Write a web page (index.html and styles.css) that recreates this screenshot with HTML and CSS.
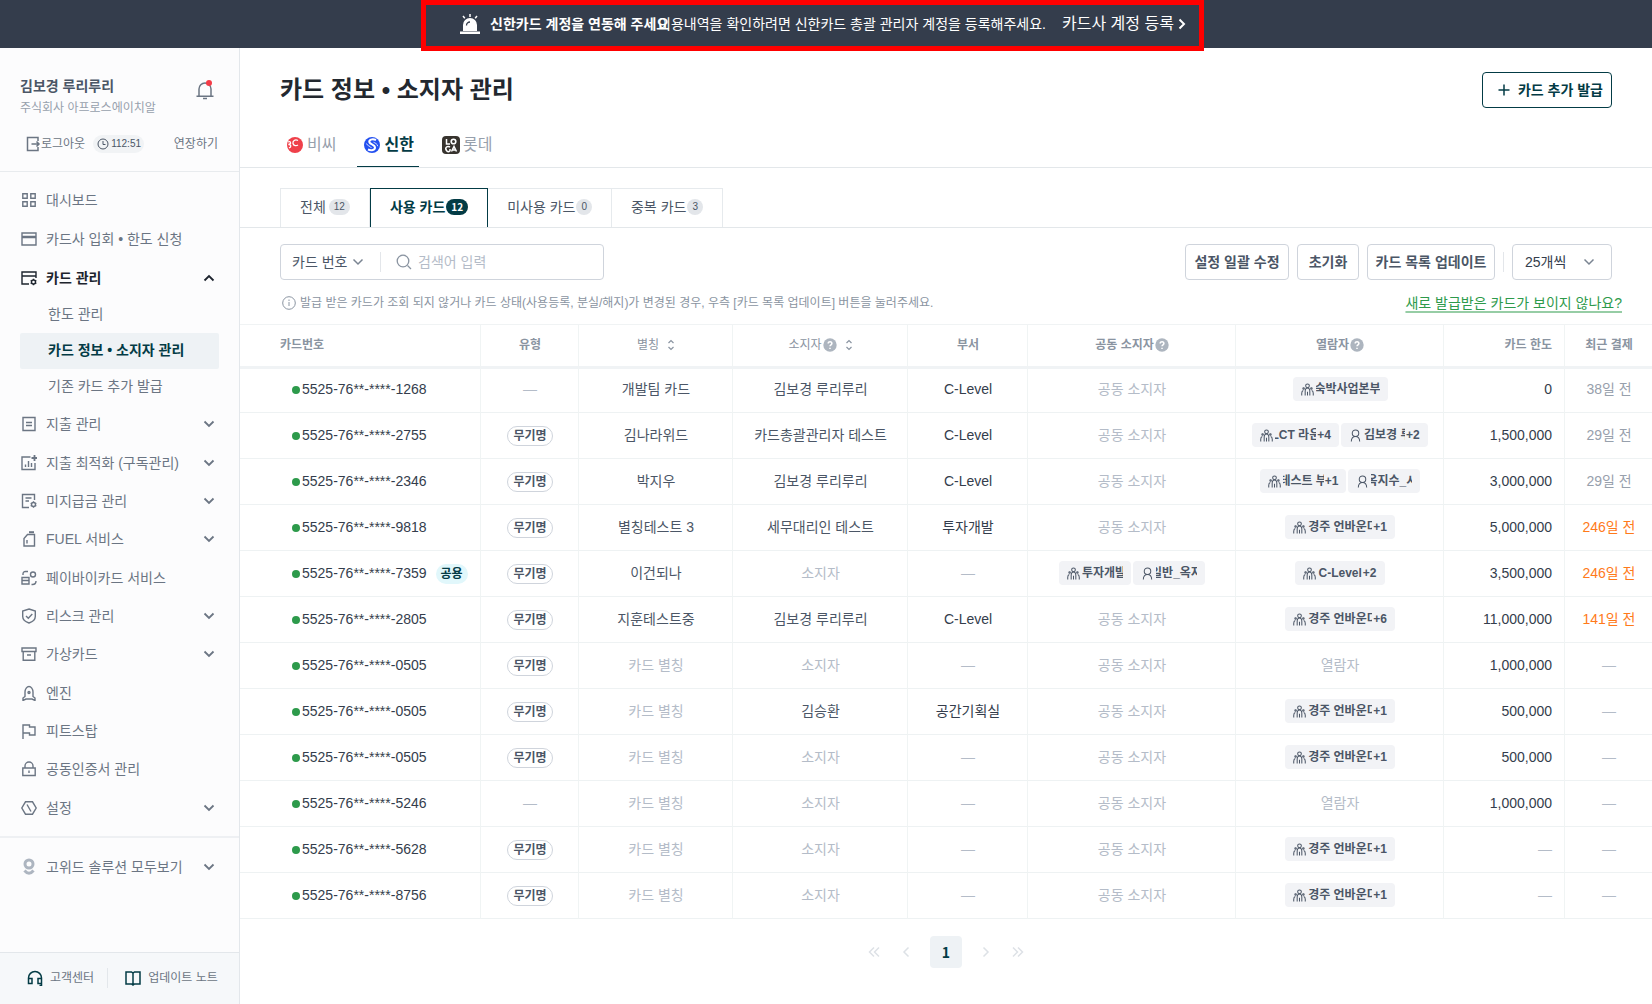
FILE: index.html
```html
<!DOCTYPE html>
<html lang="ko">
<head>
    <meta charset="UTF-8">
    <meta name="viewport" content="width=device-width, initial-scale=1.0">
    <title>카드 정보 • 소지자 관리</title>
    <link rel="stylesheet" href="styles.css">
</head>
<body>
    <svg class="sprite" aria-hidden="true">
        <symbol id="down" viewBox="0 0 12 12"><path d="M1.5 3.5 6 8l4.5-4.5"/></symbol>
        <symbol id="up" viewBox="0 0 12 12"><path d="M1.5 8.5 6 4l4.5 4.5"/></symbol>
        <symbol id="sort" viewBox="0 0 8 12"><path d="M1.5 4 4 1.5 6.5 4M1.5 8 4 10.5 6.5 8"/></symbol>
        <symbol id="help" viewBox="0 0 14 14"><circle cx="7" cy="7" r="6.7" fill="#adb5bf" stroke="none"/><path d="M5.2 5.5c0-2.4 3.7-2.3 3.7 0C8.9 6.8 7 6.9 7 8.300M7 9.700v1.200" stroke="#fff" stroke-width="1.500"/></symbol>
        <symbol id="group" viewBox="0 0 14 14"><circle cx="7" cy="3" r="2"/><circle cx="2.800" cy="6" r=".8"/><circle cx="11.200" cy="6" r=".8"/><path d="M4.500 13.500V9C4.500 6.500 5.500 5.300 7 5.300S9.500 6.500 9.500 9v4.500M7 9.500v4M.8 13.500V11c0-1.700.6-2.800 1.700-3M13.200 13.500V11c0-1.700-.6-2.800-1.700-3"/></symbol>
        <symbol id="person" viewBox="0 0 14 14"><circle cx="7" cy="4.500" r="3.500"/><path d="M2.500 13.500C2.500 10 4.300 8 7 8s4.500 2 4.500 5.500"/></symbol>
    </svg>

    <div class="banner">
        <svg class="siren" viewBox="0 0 20 20"><path d="M0 17.500h20V20H0zM3 17v-6a7 7 0 0 1 14 0v6z" fill="#fff"/><path d="M6.500 11.500A3.500 3.500 0 0 1 10 8" fill="none" stroke="#343d4c" stroke-width="1.300"/><path d="M10 0v3M3 2l1.800 2.200M17 2l-1.800 2.200" stroke="#fff" stroke-width="1.500"/></svg>
        <strong class="banner-title">신한카드 계정을 연동해 주세요</strong>
        <span class="banner-text">이용내역을 확인하려면 신한카드 총괄 관리자 계정을 등록해주세요.</span>
        <a href="#" class="banner-link">카드사 계정 등록<svg viewBox="0 0 8 12"><path d="M1.500 1.500 6 6l-4.500 4.500"/></svg></a>
        <div class="highlight"></div>
    </div>

    <div class="layout">
        <aside class="sidebar">
            <div class="profile">
                <div class="profile-top">
                    <div>
                        <div class="user">김보경 루리루리</div>
                        <div class="company">주식회사 아프로스에이치알</div>
                    </div>
                    <button class="bell" aria-label="알림"><svg viewBox="0 0 20 20"><path d="M4 16V9a6 6 0 0 1 12 0v7M1.500 16.300h17M8 18.500h4"/><circle cx="14" cy="3" r="3" fill="#f43b47" stroke="none"/></svg></button>
                </div>
                <div class="session">
                    <button class="logout"><svg viewBox="0 0 16 16"><path d="M13 5V1.500H2.500v13H13V11M6.500 8H14M11.500 5.500 14 8l-2.500 2.500"/></svg>로그아웃</button>
                    <span class="clock"><svg viewBox="0 0 12 12"><circle cx="6" cy="6" r="5"/><path d="M6 3v3.500h2.500"/></svg>112:51</span>
                    <button class="extend">연장하기</button>
                </div>
            </div>

            <nav class="nav">
                <div class="nav-top">
                    <a href="#" class="nav-item"><svg viewBox="0 0 16 16"><path d="M1.800 1.800h4.400v4.400H1.800zM9.800 1.800h4.400v4.400H9.800zM1.800 9.800h4.400v4.400H1.800zM9.800 9.800h4.400v4.400H9.800z"/></svg>대시보드</a>
                    <a href="#" class="nav-item"><svg viewBox="0 0 16 16"><path d="M1 2h14v12H1z"/><path d="M1 6h14" stroke-width="2.500"/></svg>카드사 입회 • 한도 신청</a>
                    <a href="#" class="nav-item open"><svg viewBox="0 0 16 16"><path d="M8 14H1V2h14v6M1 6h14"/><circle cx="12.500" cy="12" r="2"/><path d="M12.500 8.800V10M12.500 14v1.300M9.700 10.400l1 .6M14.300 13l1 .6M15.300 10.400l-1 .6M10.700 13l-1 .6"/></svg>카드 관리<svg class="arrow"><use href="#up"/></svg></a>
                </div>
                <div class="nav-sub">
                    <a href="#">한도 관리</a>
                    <a href="#" class="current">카드 정보 • 소지자 관리</a>
                    <a href="#">기존 카드 추가 발급</a>
                </div>
                <div class="nav-rest">
                    <a href="#" class="nav-item"><svg viewBox="0 0 16 16"><path d="M2 1.500h12v13H2zM5 6.500h6M5 9.500h6"/></svg>지출 관리<svg class="arrow"><use href="#down"/></svg></a>
                    <a href="#" class="nav-item"><svg viewBox="0 0 16 16"><path d="M9.500 2H1v12.500h13V8M4.500 12V9.500M7.500 12V6M10.500 12V8"/><path d="M13.500 0v6M10.500 3h6" stroke-width="1.800"/></svg>지출 최적화 (구독관리)<svg class="arrow"><use href="#down"/></svg></a>
                    <a href="#" class="nav-item"><svg viewBox="0 0 16 16"><path d="M8 14.500H1.500v-13h12V7M4.500 5h6M4.500 8h3.500"/><circle cx="12.500" cy="11.500" r="2"/><path d="M12.500 8.300v1.200M12.500 13.500v1.300M9.700 10l1 .6M14.300 12.500l1 .6M15.300 10l-1 .6M10.700 12.500l-1 .6"/></svg>미지급금 관리<svg class="arrow"><use href="#down"/></svg></a>
                    <a href="#" class="nav-item"><svg viewBox="0 0 16 16"><path d="M3 15V7.500l3.500-4H13.500V15zM6 9v3.500"/><path d="M8 1.200h5" stroke-width="2"/></svg>FUEL 서비스<svg class="arrow"><use href="#down"/></svg></a>
                    <a href="#" class="nav-item"><svg viewBox="0 0 16 16"><path d="M1 7.500h7v6.500H1zM1 10.500h7M2 5V4q0-2.500 2.500-2.500H7M15 11q0 3.500-3.500 3.500h-1"/><circle cx="12" cy="4.500" r="2.500"/></svg>페이바이카드 서비스</a>
                    <a href="#" class="nav-item"><svg viewBox="0 0 16 16"><path d="M8 1 14.300 3v5.500c0 3-2.800 5.300-6.300 6.500-3.500-1.200-6.300-3.500-6.300-6.500V3zM5 8l2.300 2.200L11.300 6"/></svg>리스크 관리<svg class="arrow"><use href="#down"/></svg></a>
                    <a href="#" class="nav-item"><svg viewBox="0 0 16 16"><path d="M1 2h14v3.500H1zM2.200 5.500v8.800h11.600V5.500M6 9h4"/></svg>가상카드<svg class="arrow"><use href="#down"/></svg></a>
                    <a href="#" class="nav-item"><svg viewBox="0 0 16 16"><path d="M4 11.500V7c0-3 2-5.500 4-5.500S12 4 12 7v4.500l2 1.500v2.500L11 14H5l-3 1.500V13z"/><circle cx="8" cy="7.500" r="1"/></svg>엔진</a>
                    <a href="#" class="nav-item"><svg viewBox="0 0 16 16"><path d="M2 16V2h6.500v2h5.500v8H8.500v-2H2"/></svg>피트스탑</a>
                    <a href="#" class="nav-item"><svg viewBox="0 0 16 16"><path d="M1.800 7h12.400v7.500H1.800zM4 7V5a4 4 0 0 1 8 0v2M8 9.500V12"/></svg>공동인증서 관리</a>
                    <a href="#" class="nav-item"><svg viewBox="0 0 16 16"><path d="M4.500 1.800h7L15.200 8l-3.700 6.200h-7L.8 8zM6 4.500l4 7"/></svg>설정<svg class="arrow"><use href="#down"/></svg></a>
                </div>
            </nav>

            <a href="#" class="nav-item solutions"><svg class="gowid" viewBox="0 0 16 18"><circle cx="8" cy="6" r="4"/><path d="M3.500 12.500q4.500 5.500 9 0"/></svg>고위드 솔루션 모두보기<svg class="arrow"><use href="#down"/></svg></a>

            <div class="side-foot">
                <a href="#"><svg viewBox="0 0 16 16"><path d="M1.500 12V8a6.500 6.500 0 0 1 13 0v4M1.500 8.500H5v5H1.500zM11 8.500h3.500v5H11zM14.500 13.500v2h-2"/></svg>고객센터</a>
                <a href="#" class="notes"><svg viewBox="0 0 16 16"><path d="M1 2h5.500L8 3l1.500-1H15v12H9.500L8 15l-1.500-1H1zM8 3v12"/></svg>업데이트 노트</a>
            </div>
        </aside>

        <main class="main">
            <header class="head">
                <h1>카드 정보 • 소지자 관리</h1>
                <button class="btn add"><svg viewBox="0 0 12 12"><path d="M6 .5v11M.5 6h11"/></svg>카드 추가 발급</button>
            </header>

            <div class="companies">
                <button><svg class="logo" viewBox="0 0 16 16"><circle cx="8" cy="8" r="8" fill="#ef404a"/><path d="M1 5q3-1 2.500 1.500L1.500 7.500q3 0 2 2.500l-1.500 1M11 3.500C8 2 5.500 4 6 6.500s3.500 2.500 5 1.500" fill="none" stroke="#fff" stroke-width="1.300"/></svg>비씨</button>
                <button class="active"><svg class="logo" viewBox="0 0 16 16"><circle cx="8" cy="8" r="8" fill="#2350f0"/><path d="M12 3C8 1 4.500 3 5.500 5.500c1 2 5.500 2 5.500 5 0 2.500-3.500 3.500-7 2" fill="none" stroke="#fff" stroke-width="2"/><path d="M2.500 6.500c.5 2.500 4 2.500 5 4.500M9.500 5.200c1.500.8 4 1.500 4.200 4" fill="none" stroke="#fff" stroke-width=".8"/></svg>신한</button>
                <button class="lotte"><svg class="logo" viewBox="0 0 18 18"><rect width="18" height="18" rx="4" fill="#37332e"/><path d="M4.500 3v5h3.500M8 11q-2-1.200-3.500 0t0 3.500 3.500.2V13M9.500 15.500l2.500-5 2.500 5M10.500 14h3" fill="none" stroke="#fff" stroke-width="1.500"/><circle cx="11.500" cy="5.500" r="2.300" fill="none" stroke="#fff" stroke-width="1.600"/></svg>롯데</button>
            </div>

            <div class="filters">
                <button>전체<span class="count">12</span></button>
                <button class="active">사용 카드<span class="count">12</span></button>
                <button>미사용 카드<span class="count">0</span></button>
                <button>중복 카드<span class="count">3</span></button>
            </div>

            <div class="toolbar">
                <div class="search">
                    <select class="search-type" aria-label="검색 조건"><option>카드 번호</option></select>
                    <svg class="chev"><use href="#down"/></svg>
                    <span class="bar"></span>
                    <svg class="glass" viewBox="0 0 16 16"><circle cx="7" cy="7" r="5.800"/><path d="m11.500 11.500 3.500 3.500"/></svg>
                    <input type="text" placeholder="검색어 입력" aria-label="검색어">
                </div>
                <div class="actions">
                    <button class="btn w-bulk">설정 일괄 수정</button>
                    <button class="btn w-reset">초기화</button>
                    <button class="btn w-update">카드 목록 업데이트</button>
                    <span class="bar"></span>
                    <div class="page-size">
                        <select aria-label="페이지당 개수"><option>25개씩</option></select>
                        <svg class="chev"><use href="#down"/></svg>
                    </div>
                </div>
            </div>

            <div class="notice">
                <p><svg viewBox="0 0 14 14"><circle cx="7" cy="7" r="6.300"/><path d="M7 6v4M7 3.500V5"/></svg>발급 받은 카드가 조회 되지 않거나 카드 상태(사용등록, 분실/해지)가 변경된 경우, 우측 [카드 목록 업데이트] 버튼을 눌러주세요.</p>
                <a href="#">새로 발급받은 카드가 보이지 않나요?</a>
            </div>

            <table class="cards">
                <colgroup>
                    <col class="c-number"><col class="c-type"><col class="c-alias"><col class="c-owner"><col class="c-dept"><col class="c-shared"><col class="c-viewer"><col class="c-limit"><col>
                </colgroup>
                <thead>
                    <tr>
                        <th class="number-head">카드번호</th>
                        <th>유형</th>
                        <th><button class="sort">별칭<svg><use href="#sort"/></svg></button></th>
                        <th><button class="sort">소지자<svg class="help"><use href="#help"/></svg><svg><use href="#sort"/></svg></button></th>
                        <th>부서</th>
                        <th><span class="th-help">공동 소지자<svg class="help"><use href="#help"/></svg></span></th>
                        <th><span class="th-help">열람자<svg class="help"><use href="#help"/></svg></span></th>
                        <th class="limit">카드 한도</th>
                        <th>최근 결제</th>
                    </tr>
                </thead>
                <tbody>
                    <tr>
                        <td class="number">5525-76**-****-1268</td>
                        <td class="none">—</td>
                        <td>개발팀 카드</td>
                        <td>김보경 루리루리</td>
                        <td class="dept">C-Level</td>
                        <td class="none">공동 소지자</td>
                        <td><span class="chip wide"><svg><use href="#group"/></svg><span class="clip">숙박사업본부</span></span></td>
                        <td class="limit">0</td>
                        <td class="recent">38일 전</td>
                    </tr>
                    <tr>
                        <td class="number">5525-76**-****-2755</td>
                        <td><span class="pill">무기명</span></td>
                        <td>김나라위드</td>
                        <td>카드총괄관리자 테스트</td>
                        <td class="dept">C-Level</td>
                        <td class="none">공동 소지자</td>
                        <td><span class="chip"><svg><use href="#group"/></svg><span class="clip">LCT 라운</span><span class="more">+4</span></span><span class="chip"><svg><use href="#person"/></svg><span class="clip start">김보경 루</span><span class="more">+2</span></span></td>
                        <td class="limit">1,500,000</td>
                        <td class="recent">29일 전</td>
                    </tr>
                    <tr>
                        <td class="number">5525-76**-****-2346</td>
                        <td><span class="pill">무기명</span></td>
                        <td>박지우</td>
                        <td>김보경 루리루리</td>
                        <td class="dept">C-Level</td>
                        <td class="none">공동 소지자</td>
                        <td><span class="chip"><svg><use href="#group"/></svg><span class="clip">테스트 부</span><span class="more">+1</span></span><span class="chip"><svg><use href="#person"/></svg><span class="clip">옥지수_시</span></span></td>
                        <td class="limit">3,000,000</td>
                        <td class="recent">29일 전</td>
                    </tr>
                    <tr>
                        <td class="number">5525-76**-****-9818</td>
                        <td><span class="pill">무기명</span></td>
                        <td>별칭테스트 3</td>
                        <td>세무대리인 테스트</td>
                        <td class="dept">투자개발</td>
                        <td class="none">공동 소지자</td>
                        <td><span class="chip wide"><svg><use href="#group"/></svg><span class="clip start">경주 언바운더</span><span class="more">+1</span></span></td>
                        <td class="limit">5,000,000</td>
                        <td class="recent late">246일 전</td>
                    </tr>
                    <tr>
                        <td class="number">5525-76**-****-7359<span class="shared">공용</span></td>
                        <td><span class="pill">무기명</span></td>
                        <td>이건되나</td>
                        <td class="none">소지자</td>
                        <td class="none">—</td>
                        <td><span class="chip"><svg><use href="#group"/></svg><span class="clip start">투자개발</span></span><span class="chip"><svg><use href="#person"/></svg><span class="clip">일반_옥지</span></span></td>
                        <td><span class="chip"><svg><use href="#group"/></svg><span>C-Level</span><span class="more">+2</span></span></td>
                        <td class="limit">3,500,000</td>
                        <td class="recent late">246일 전</td>
                    </tr>
                    <tr>
                        <td class="number">5525-76**-****-2805</td>
                        <td><span class="pill">무기명</span></td>
                        <td>지훈테스트중</td>
                        <td>김보경 루리루리</td>
                        <td class="dept">C-Level</td>
                        <td class="none">공동 소지자</td>
                        <td><span class="chip wide"><svg><use href="#group"/></svg><span class="clip start">경주 언바운더</span><span class="more">+6</span></span></td>
                        <td class="limit">11,000,000</td>
                        <td class="recent late">141일 전</td>
                    </tr>
                    <tr>
                        <td class="number">5525-76**-****-0505</td>
                        <td><span class="pill">무기명</span></td>
                        <td class="none">카드 별칭</td>
                        <td class="none">소지자</td>
                        <td class="none">—</td>
                        <td class="none">공동 소지자</td>
                        <td class="none">열람자</td>
                        <td class="limit">1,000,000</td>
                        <td class="none">—</td>
                    </tr>
                    <tr>
                        <td class="number">5525-76**-****-0505</td>
                        <td><span class="pill">무기명</span></td>
                        <td class="none">카드 별칭</td>
                        <td>김승환</td>
                        <td class="dept">공간기획실</td>
                        <td class="none">공동 소지자</td>
                        <td><span class="chip wide"><svg><use href="#group"/></svg><span class="clip start">경주 언바운더</span><span class="more">+1</span></span></td>
                        <td class="limit">500,000</td>
                        <td class="none">—</td>
                    </tr>
                    <tr>
                        <td class="number">5525-76**-****-0505</td>
                        <td><span class="pill">무기명</span></td>
                        <td class="none">카드 별칭</td>
                        <td class="none">소지자</td>
                        <td class="none">—</td>
                        <td class="none">공동 소지자</td>
                        <td><span class="chip wide"><svg><use href="#group"/></svg><span class="clip start">경주 언바운더</span><span class="more">+1</span></span></td>
                        <td class="limit">500,000</td>
                        <td class="none">—</td>
                    </tr>
                    <tr>
                        <td class="number">5525-76**-****-5246</td>
                        <td class="none">—</td>
                        <td class="none">카드 별칭</td>
                        <td class="none">소지자</td>
                        <td class="none">—</td>
                        <td class="none">공동 소지자</td>
                        <td class="none">열람자</td>
                        <td class="limit">1,000,000</td>
                        <td class="none">—</td>
                    </tr>
                    <tr>
                        <td class="number">5525-76**-****-5628</td>
                        <td><span class="pill">무기명</span></td>
                        <td class="none">카드 별칭</td>
                        <td class="none">소지자</td>
                        <td class="none">—</td>
                        <td class="none">공동 소지자</td>
                        <td><span class="chip wide"><svg><use href="#group"/></svg><span class="clip start">경주 언바운더</span><span class="more">+1</span></span></td>
                        <td class="limit none">—</td>
                        <td class="none">—</td>
                    </tr>
                    <tr>
                        <td class="number">5525-76**-****-8756</td>
                        <td><span class="pill">무기명</span></td>
                        <td class="none">카드 별칭</td>
                        <td class="none">소지자</td>
                        <td class="none">—</td>
                        <td class="none">공동 소지자</td>
                        <td><span class="chip wide"><svg><use href="#group"/></svg><span class="clip start">경주 언바운더</span><span class="more">+1</span></span></td>
                        <td class="limit none">—</td>
                        <td class="none">—</td>
                    </tr>
                </tbody>
            </table>

            <div class="pagination">
                <button aria-label="처음"><svg viewBox="0 0 12 12"><path d="M6 1.500 1.500 6 6 10.500M11 1.500 6.500 6l4.500 4.500"/></svg></button>
                <button aria-label="이전"><svg viewBox="0 0 12 12"><path d="M8.500 1.500 4 6l4.500 4.500"/></svg></button>
                <button class="page">1</button>
                <button aria-label="다음"><svg viewBox="0 0 12 12"><path d="M3.500 1.500 8 6l-4.500 4.500"/></svg></button>
                <button aria-label="마지막"><svg viewBox="0 0 12 12"><path d="M1 1.500 5.500 6 1 10.500M6 1.500 10.500 6 6 10.500"/></svg></button>
            </div>
        </main>
    </div>
</body>
</html>
```

FILE: styles.css
```css
* {
    box-sizing: border-box;
}

body {
    margin: 0;
    min-height: 100vh;
    display: flex;
    flex-direction: column;
    font-family: "Liberation Sans", "Noto Sans CJK KR", sans-serif;
    font-size: 14px;
    line-height: 20px;
    color: #4b5666;
    background: #fff;
}

a {
    color: inherit;
    text-decoration: none;
}

button, input, select {
    font: inherit;
    color: inherit;
    margin: 0;
    padding: 0;
    border: none;
    background: none;
    outline: none;
    white-space: nowrap;
}

select {
    appearance: none;
}

svg {
    flex: none;
    fill: none;
    stroke: currentColor;
    stroke-width: 1.5;
}

.sprite {
    display: none;
}

/* top banner */
.banner {
    position: relative;
    display: flex;
    align-items: center;
    justify-content: center;
    height: 48px;
    padding-right: 6px;
    background: #343d4c;
    color: #fff;
    white-space: nowrap;
}

.siren {
    width: 20px;
    height: 20px;
    margin-right: 10px;
    stroke: none;
}

.banner-title {
    width: 168px;
}

.banner-link {
    display: flex;
    align-items: center;
    gap: 4px;
    margin-left: 16px;
    font-size: 16px;
}

.banner-link svg {
    width: 8px;
    height: 12px;
    stroke-width: 2;
}

.highlight {
    position: absolute;
    top: 0;
    left: 50%;
    width: 783px;
    height: 51px;
    margin-left: -405px;
    border: 5px solid #f00;
}

.layout {
    flex: 1;
    display: flex;
}

/* sidebar */
.sidebar {
    flex: none;
    width: 240px;
    display: flex;
    flex-direction: column;
    background: #fcfcfd;
    border-right: 1px solid #e3e7eb;
    color: #6b7583;
}

.profile {
    height: 124px;
    padding: 28px 21px 0 20px;
    border-bottom: 1px solid #e8ebee;
}

.profile-top {
    display: flex;
    align-items: flex-start;
    justify-content: space-between;
}

.user {
    font-weight: bold;
    color: #4b5666;
}

.company {
    padding-top: 2px;
    font-size: 12px;
    color: #97a0ac;
}

.bell {
    padding: 4px 3px 0 0;
}

.bell svg {
    display: block;
    width: 20px;
    height: 20px;
}

.session {
    display: flex;
    align-items: center;
    margin-top: 16px;
    padding-left: 5px;
    font-size: 12px;
}

.logout {
    display: flex;
    align-items: center;
}

.logout svg {
    width: 16px;
    height: 16px;
}

.clock {
    display: flex;
    align-items: center;
    gap: 2px;
    height: 18px;
    margin-left: 8px;
    padding: 0 3px 0 4px;
    border-radius: 9px;
    background: #f1f3f5;
    color: #4b5666;
    font-size: 10px;
}

.clock svg {
    width: 12px;
    height: 12px;
    stroke-width: 1;
}

.extend {
    margin-left: auto;
}

.nav {
    padding: 9px 0;
    border-bottom: 2px solid #eef0f3;
}

.nav-top, .nav-rest {
    display: grid;
    grid-auto-rows: 1fr;
}

.nav-top {
    height: 116px;
}

.nav-rest {
    height: 422px;
}

.nav-item {
    display: flex;
    align-items: center;
    gap: 9px;
    padding: 0 24px 0 21px;
}

.nav-item svg {
    width: 16px;
    height: 16px;
    stroke-width: 1.4;
}

.nav-item .arrow {
    width: 12px;
    height: 12px;
    margin-left: auto;
    stroke-width: 1.8;
}

.nav-item.open {
    color: #1d242e;
    font-weight: bold;
}

.nav-sub {
    padding: 0 20px;
}

.nav-sub a {
    display: block;
    height: 36px;
    padding-left: 28px;
    line-height: 34px;
    border-radius: 2px;
}

.nav-sub .current {
    background: #eef2f5;
    color: #033b45;
    font-weight: bold;
}

.solutions {
    height: 58px;
}

.nav-item .gowid {
    height: 18px;
    stroke: #adb5c0;
    stroke-width: 3;
}

.side-foot {
    display: flex;
    align-items: center;
    margin-top: auto;
    height: 52px;
    padding: 0 0 2px 27px;
    border-top: 1px solid #e3e7eb;
    background: #f6f8fa;
    font-size: 12px;
}

.side-foot a {
    display: flex;
    align-items: center;
    gap: 7px;
}

.side-foot svg {
    width: 16px;
    height: 16px;
    color: #033b45;
}

.side-foot .notes {
    margin-left: 13px;
    padding-left: 17px;
    border-left: 1px solid #e3e7eb;
}

/* main area */
.main {
    flex: 1;
    min-width: 0;
}

.head {
    display: flex;
    align-items: center;
    justify-content: space-between;
    padding: 24px 40px 0;
}

.head h1 {
    margin: 0;
    font-size: 24px;
    line-height: 32px;
    color: #23282f;
}

.btn {
    height: 36px;
    border: 1px solid #cfd4dc;
    border-radius: 4px;
    font-weight: bold;
    background: #fff;
}

.btn.add {
    display: flex;
    align-items: center;
    gap: 8px;
    padding: 0 8px 1px 15px;
    border-color: #033b45;
    color: #033b45;
}

.add svg {
    width: 12px;
    height: 12px;
}

.companies {
    display: flex;
    gap: 16px;
    height: 60px;
    padding: 15px 40px 0;
    border-bottom: 1px solid #e3e7ea;
    font-size: 16px;
    color: #97a0ac;
}

.companies button {
    display: flex;
    align-items: center;
    gap: 4px;
    padding: 0 5px 0 7px;
    border-bottom: 1px solid transparent;
}

.companies .active {
    border-color: #033b45;
    color: #033b45;
    font-weight: bold;
}

.logo {
    width: 16px;
    height: 16px;
    stroke: none;
}

.companies .lotte {
    gap: 3px;
}

.lotte .logo {
    width: 18px;
    height: 18px;
}

.filters {
    display: flex;
    height: 60px;
    padding: 20px 40px 0;
    border-bottom: 1px solid #e3e7ea;
}

.filters button {
    display: flex;
    align-items: center;
    gap: 1px;
    padding: 0 19px 2px;
    border: 1px solid #e6eaed;
    border-bottom: none;
}

.filters button:first-child {
    gap: 3px;
}

.filters button + button {
    border-left: none;
}

.filters button.active {
    border: 1px solid #033b45;
    border-bottom: none;
    color: #033b45;
    font-weight: bold;
}

.count {
    padding: 0 5px;
    border-radius: 8px;
    background: #e3e6ea;
    font-size: 10px;
    line-height: 16px;
}

.active .count {
    background: #033b45;
    color: #fff;
    font-family: "Noto Sans CJK KR", sans-serif;
}

.toolbar {
    display: flex;
    justify-content: space-between;
    padding: 16px 40px 0;
}

.search, .actions {
    display: flex;
    align-items: center;
}

.search {
    width: 324px;
    height: 36px;
    padding-left: 11px;
    border: 1px solid #cfd4dc;
    border-radius: 4px;
}

.search-type {
    width: 60px;
}

.chev {
    width: 12px;
    height: 12px;
    color: #7a8492;
}

.bar {
    width: 1px;
    height: 20px;
    background: #e3e6ea;
}

.search .bar {
    margin: 0 15px 0 16px;
}

.glass {
    width: 16px;
    height: 16px;
    margin-right: 6px;
    color: #8a94a1;
    stroke-width: 1.3;
}

.search input {
    flex: 1;
    min-width: 0;
}

.search input::placeholder {
    color: #b4bcc8;
}

.actions {
    gap: 8px;
}

.w-bulk {
    width: 104px;
}

.w-reset {
    width: 62px;
}

.w-update {
    width: 128px;
}

.page-size {
    display: flex;
    align-items: center;
    width: 100px;
    height: 36px;
    padding: 0 16px 0 12px;
    border: 1px solid #cfd4dc;
    border-radius: 4px;
    color: #343d4c;
}

.page-size select {
    flex: 1;
}

.notice {
    display: flex;
    align-items: center;
    justify-content: space-between;
    height: 44px;
    padding: 2px 30px 0 42px;
}

.notice p {
    display: flex;
    align-items: center;
    gap: 4px;
    margin: 0;
    font-size: 12px;
    color: #8a94a1;
}

.notice svg {
    width: 14px;
    height: 14px;
    stroke-width: 1;
}

.notice a {
    color: #2d9a4b;
    text-decoration: underline #96cda5 2px;
    text-underline-offset: 3px;
    text-decoration-skip-ink: none;
}

/* card table */
.cards {
    width: 100%;
    table-layout: fixed;
    border-collapse: separate;
    border-spacing: 0;
    text-align: center;
    white-space: nowrap;
}

.c-number { width: 241px; }
.c-type { width: 98px; }
.c-alias { width: 154px; }
.c-owner { width: 175px; }
.c-dept { width: 120px; }
.c-shared { width: 208px; }
.c-viewer { width: 208px; }
.c-limit { width: 121px; }

.cards th, .cards td {
    height: 46px;
    padding: 0 0 1px 1px;
    border-right: 1px solid #f0f4f4;
    border-bottom: 1px solid #eef2f3;
}

.cards th:last-child, .cards td:last-child {
    border-right: none;
}

.cards th {
    height: 45px;
    padding-bottom: 2px;
    border-top: 1px solid #f0f3f4;
    border-bottom: 3px solid #f0f3f5;
    font-size: 12px;
    font-weight: bold;
    color: #8a94a1;
}

.cards tbody tr:first-child td {
    height: 44px;
    padding-bottom: 3px;
}

.cards .number-head {
    padding-left: 40px;
    text-align: left;
}

.sort, .th-help {
    display: inline-flex;
    align-items: center;
    vertical-align: middle;
}

.sort {
    font-weight: normal;
}

.sort svg {
    width: 8px;
    height: 12px;
    margin-left: 8px;
    stroke-width: 1.2;
}

.cards .help {
    width: 14px;
    height: 14px;
    margin-left: 1px;
}

.cards .number {
    padding-left: 52px;
    text-align: left;
    color: #343d4c;
}

.number::before {
    content: "";
    display: inline-block;
    width: 8px;
    height: 8px;
    margin-right: 2px;
    border-radius: 50%;
    background: #2d9a4b;
}

.shared, .pill {
    display: inline-block;
    font-size: 12px;
    font-weight: bold;
    border-radius: 10px;
}

.shared {
    margin-left: 9px;
    padding: 0 5px;
    background: #e1f7fb;
    color: #033b45;
}

.pill {
    padding: 0 5px;
    border: 1px solid #cfd4dc;
    line-height: 18px;
    vertical-align: middle;
}

.cards .dept {
    color: #343d4c;
}

.cards .limit {
    padding-right: 12px;
    text-align: right;
}

.cards td.limit {
    color: #343d4c;
}

.recent {
    color: #97a0ac;
}

.recent.late {
    color: #ff7a1a;
}

.cards td.none {
    color: #b4bcc8;
}

.chip {
    display: inline-flex;
    align-items: center;
    height: 24px;
    padding: 0 8px;
    border-radius: 4px;
    background: #f2f3f6;
    font-size: 12px;
    font-weight: bold;
    vertical-align: middle;
}

.chip + .chip {
    margin-left: 2px;
}

.chip svg {
    width: 13px;
    height: 13px;
    margin-right: 2px;
    stroke-width: 1.1;
}

.more {
    margin-left: 1px;
}

.clip {
    display: flex;
    justify-content: center;
    width: 41px;
    overflow: hidden;
}

.wide .clip {
    width: 64px;
}

.clip.start {
    justify-content: flex-start;
}

.pagination {
    display: flex;
    justify-content: center;
    align-items: center;
    height: 65px;
}

.pagination button {
    width: 32px;
    height: 32px;
    color: #dde1e6;
}

.pagination svg {
    display: block;
    width: 12px;
    height: 12px;
    margin: auto;
}

.pagination .page {
    margin: 0 8px;
    border-radius: 4px;
    background: #eef2f5;
    color: #033b45;
    font-family: "Noto Sans CJK KR", sans-serif;
    font-weight: bold;
}
```
